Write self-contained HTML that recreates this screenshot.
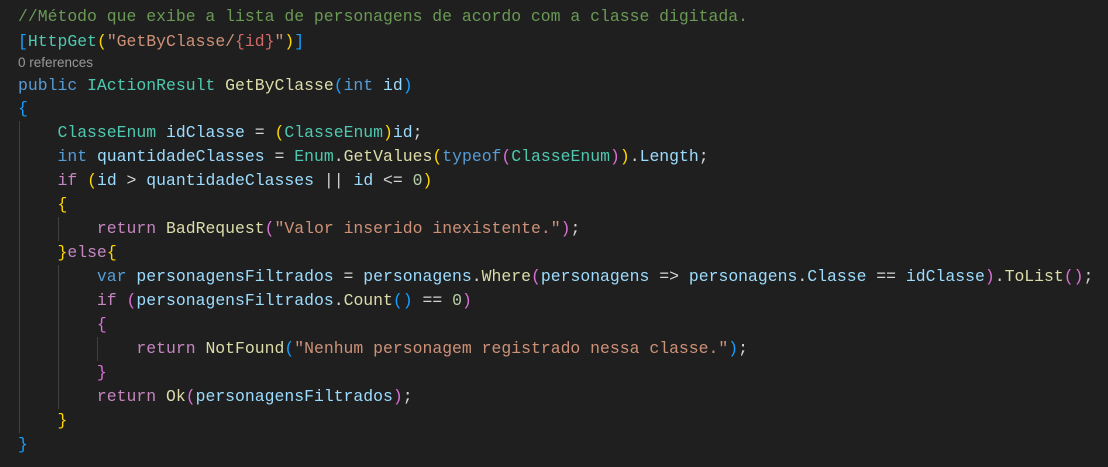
<!DOCTYPE html>
<html><head><meta charset="utf-8"><style>
body{margin:0;width:1108px;height:467px;background:#1f1f1f;overflow:hidden;position:relative}
.l{position:absolute;left:18px;height:24px;line-height:24px;font-family:"Liberation Mono",monospace;font-size:16.45px;color:#d4d4d4;white-space:pre}
.r{position:absolute;left:18px;font-family:"Liberation Sans",sans-serif;font-size:13.5px;color:#999;line-height:18px}
.g{position:absolute;width:1px;background:#404040}
.c{color:#6a9955}.k{color:#569cd6}.p{color:#c586c0}.t{color:#4ec9b0}.m{color:#dcdcaa}.v{color:#9cdcfe}.s{color:#ce9178}.n{color:#b5cea8}
.y{color:#ffd700}.u{color:#da70d6}.b{color:#179fff}.e{color:#d16969}
</style></head><body>
<div class="g" style="left:19px;top:121px;height:312px"></div>
<div class="g" style="left:58px;top:217px;height:24px"></div>
<div class="g" style="left:58px;top:265px;height:144px"></div>
<div class="g" style="left:97px;top:337px;height:24px"></div>
<div class="l" style="top:5px"><span class="c">//Método que exibe a lista de personagens de acordo com a classe digitada.</span></div>
<div class="l" style="top:30px"><span class="b">[</span><span class="t">HttpGet</span><span class="y">(</span><span class="s">"GetByClasse/</span><span class="e">{id}</span><span class="s">"</span><span class="y">)</span><span class="b">]</span></div>
<div class="r" style="top:54px">0 references</div>
<div class="l" style="top:74px"><span class="k">public</span> <span class="t">IActionResult</span> <span class="m">GetByClasse</span><span class="b">(</span><span class="k">int</span> <span class="v">id</span><span class="b">)</span></div>
<div class="l" style="top:97px"><span class="b">{</span></div>
<div class="l" style="top:121px">    <span class="t">ClasseEnum</span> <span class="v">idClasse</span> = <span class="y">(</span><span class="t">ClasseEnum</span><span class="y">)</span><span class="v">id</span>;</div>
<div class="l" style="top:145px">    <span class="k">int</span> <span class="v">quantidadeClasses</span> = <span class="t">Enum</span>.<span class="m">GetValues</span><span class="y">(</span><span class="k">typeof</span><span class="u">(</span><span class="t">ClasseEnum</span><span class="u">)</span><span class="y">)</span>.<span class="v">Length</span>;</div>
<div class="l" style="top:169px">    <span class="p">if</span> <span class="y">(</span><span class="v">id</span> &gt; <span class="v">quantidadeClasses</span> || <span class="v">id</span> &lt;= <span class="n">0</span><span class="y">)</span></div>
<div class="l" style="top:193px">    <span class="y">{</span></div>
<div class="l" style="top:217px">        <span class="p">return</span> <span class="m">BadRequest</span><span class="u">(</span><span class="s">"Valor inserido inexistente."</span><span class="u">)</span>;</div>
<div class="l" style="top:241px">    <span class="y">}</span><span class="p">else</span><span class="y">{</span></div>
<div class="l" style="top:265px">        <span class="k">var</span> <span class="v">personagensFiltrados</span> = <span class="v">personagens</span>.<span class="m">Where</span><span class="u">(</span><span class="v">personagens</span> =&gt; <span class="v">personagens</span>.<span class="v">Classe</span> == <span class="v">idClasse</span><span class="u">)</span>.<span class="m">ToList</span><span class="u">()</span>;</div>
<div class="l" style="top:289px">        <span class="p">if</span> <span class="u">(</span><span class="v">personagensFiltrados</span>.<span class="m">Count</span><span class="b">()</span> == <span class="n">0</span><span class="u">)</span></div>
<div class="l" style="top:313px">        <span class="u">{</span></div>
<div class="l" style="top:337px">            <span class="p">return</span> <span class="m">NotFound</span><span class="b">(</span><span class="s">"Nenhum personagem registrado nessa classe."</span><span class="b">)</span>;</div>
<div class="l" style="top:361px">        <span class="u">}</span></div>
<div class="l" style="top:385px">        <span class="p">return</span> <span class="m">Ok</span><span class="u">(</span><span class="v">personagensFiltrados</span><span class="u">)</span>;</div>
<div class="l" style="top:409px">    <span class="y">}</span></div>
<div class="l" style="top:433px"><span class="b">}</span></div>
</body></html>
